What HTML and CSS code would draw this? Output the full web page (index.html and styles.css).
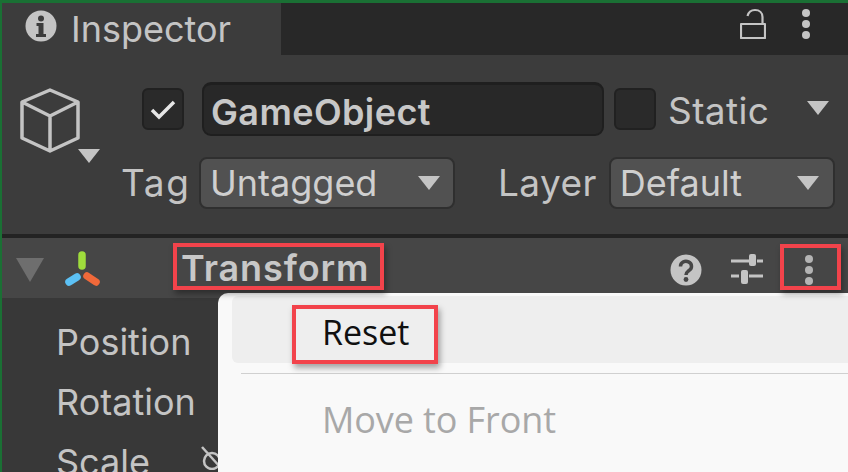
FILE: index.html
```html
<!DOCTYPE html>
<html lang="en">
<head>
<meta charset="utf-8">
<title>Inspector</title>
<link rel="stylesheet" href="styles.css">
</head>
<body>
<div class="window">
  <div class="tabbar">
    <div class="tab">
      <svg class="info-icon" viewBox="0 0 32 32"><circle cx="16" cy="16" r="15.5" fill="#c4c4c4"/><circle cx="16" cy="8.500" r="3" fill="#3c3c3c"/><path d="M11.500 13h7v11h2.500v3h-10v-3h2.500v-8h-2z" fill="#3c3c3c"/></svg>
      <span class="tab-label">Inspector</span>
    </div>
    <div class="tab-tools">
      <svg class="lock-icon" viewBox="0 0 26 32"><path d="M1 16h24v14h-24zM7.500 8C8.500 4 11 2 15 2c4.500 0 7.500 3 7.500 7v7" fill="none" stroke="#c4c4c4" stroke-width="2.200" stroke-linejoin="round"/></svg>
      <svg class="dots-icon" viewBox="0 0 10 32"><circle cx="5" cy="5" r="4" fill="#c4c4c4"/><circle cx="5" cy="16" r="4" fill="#c4c4c4"/><circle cx="5" cy="27" r="4" fill="#c4c4c4"/></svg>
    </div>
  </div>

  <div class="object-panel">
    <div class="cube-col">
      <svg class="cube-icon" viewBox="0 0 62 66"><path d="M31 2 59 14V50L31 63 3 50V14zM3 14 31 28 59 14M31 28V63" fill="none" stroke="#c4c4c4" stroke-width="3.500" stroke-linejoin="round"/></svg>
      <span class="tri tri-cube"></span>
    </div>
    <div class="object-rows">
      <div class="row row-name">
        <span class="check"><svg viewBox="0 0 28 24"><path d="M3 13 10 20 25 5" fill="none" stroke="#e6e6e6" stroke-width="3.500"/></svg></span>
        <span class="name-field">GameObject</span>
        <span class="check check-static"></span>
        <span class="label static-label">Static</span>
        <span class="tri tri-static"></span>
      </div>
      <div class="row row-tag">
        <span class="label tag-label">Tag</span>
        <span class="select select-tag">Untagged<span class="tri"></span></span>
        <span class="label layer-label">Layer</span>
        <span class="select select-layer">Default<span class="tri"></span></span>
      </div>
    </div>
  </div>

  <div class="component-head">
    <span class="fold"></span>
    <svg class="transform-icon" viewBox="0 0 40 38"><line x1="20" y1="4" x2="20" y2="15" stroke="#9fdc3c" stroke-width="7.500" stroke-linecap="round"/><line x1="7" y1="31" x2="15" y2="26" stroke="#5cc1f5" stroke-width="7.500" stroke-linecap="round"/><line x1="25" y1="25" x2="34" y2="31" stroke="#f0693a" stroke-width="7.500" stroke-linecap="round"/></svg>
    <span class="component-title">Transform</span>
    <div class="component-tools">
      <svg class="help-icon" viewBox="0 0 32 32"><circle cx="16" cy="16" r="15.500" fill="#c4c4c4"/><path d="M10.500 12.500a5.500 5 0 1 1 8.500 4c-2 1.500-3 2-3 4.500" fill="none" stroke="#464646" stroke-width="3.500"/><circle cx="16" cy="25.500" r="2.400" fill="#464646"/></svg>
      <svg class="sliders-icon" viewBox="0 0 32 32"><path d="M0 7h18M26 7h6M0 22h8M18 22h14" stroke="#c4c4c4" stroke-width="3" fill="none"/><rect x="18" y="0" width="7" height="12" rx="2" fill="#c4c4c4"/><rect x="10" y="16" width="7" height="14" rx="2" fill="#c4c4c4"/></svg>
      <svg class="dots-icon dots-small" viewBox="0 0 10 32"><circle cx="5" cy="5" r="4" fill="#b4b4b4"/><circle cx="5" cy="16" r="4" fill="#b4b4b4"/><circle cx="5" cy="27" r="4" fill="#b4b4b4"/></svg>
    </div>
  </div>

  <div class="component-body">
    <div class="prop">Position</div>
    <div class="prop">Rotation</div>
    <div class="prop prop-scale">Scale<svg class="link-icon" viewBox="0 0 24 24"><circle cx="13" cy="15" r="8" fill="none" stroke="#c4c4c4" stroke-width="2.500"/><path d="M3 1 22 22" stroke="#c4c4c4" stroke-width="2.500"/></svg></div>
  </div>

  <div class="menu">
    <div class="menu-reset">Reset</div>
    <div class="menu-sep"></div>
    <div class="menu-item">Move to Front</div>
  </div>

  <span class="mark mark-title"></span>
  <span class="mark mark-dots"></span>
  <span class="mark mark-reset"></span>
</div>
</body>
</html>
```
FILE: styles.css
```css
* { box-sizing: border-box; }
html, body { margin: 0; padding: 0; background: #383838; }
body { width: 848px; height: 472px; overflow: hidden; font-family: Inter, "Liberation Sans", sans-serif; color: #c4c4c4; }
.window { position: relative; width: 848px; height: 472px; border-top: 3px solid #1a7034; border-left: 2px solid #1a7034; overflow: hidden; }
.tabbar { display: flex; height: 52px; background: #282828; }
.tab { display: flex; align-items: center; width: 279px; padding: 0 0 6px 23px; background: #3c3c3c; }
.info-icon { width: 32px; height: 32px; }
.tab-label { margin: 5px 0 0 14px; font-size: 36px; line-height: 40px; color: #c4c4c4; }
.tab-tools { flex: 1; display: flex; align-items: flex-start; justify-content: flex-end; padding: 5px 37px 0 0; gap: 35px; }
.lock-icon { width: 26px; height: 32px; }
.dots-icon { width: 10px; height: 32px; }
.object-panel { display: flex; height: 179px; background: #3c3c3c; }
.cube-col { position: relative; width: 120px; padding: 33px 0 0 17px; }
.cube-icon { display: block; width: 62px; height: 66px; }
.tri { display: block; width: 0; height: 0; border-left: 11px solid transparent; border-right: 11px solid transparent; border-top: 14px solid #c4c4c4; }
.tri-cube { position: absolute; left: 76px; top: 94px; }
.object-rows { flex: 1; display: flex; flex-direction: column; }
.row { display: flex; align-items: center; }
.row-name { height: 54px; margin-top: 27px; padding-left: 20px; }
.check { display: flex; align-items: center; justify-content: center; width: 42px; height: 42px; background: #2a2a2a; border: 2px solid #212121; border-radius: 6px; }
.check svg { width: 28px; height: 24px; }
.name-field { width: 402px; height: 54px; margin-left: 18px; padding-left: 7px; background: #282828; border: 2px solid #1f1f1f; border-top-width: 3px; border-radius: 9px; font-size: 36px; line-height: 54px; font-weight: 600; letter-spacing: 0.4px; color: #c8c8c8; }
.check-static { margin-left: 10px; }
.label { font-size: 37px; line-height: 40px; letter-spacing: 0.4px; }
.static-label { margin: 4px 0 0 12px; }
.tri-static { margin-left: 38px; margin-top: -2px; }
.row-tag { height: 54px; margin-top: 20px; }
.tag-label { width: 66px; margin-left: -1px; text-align: right; letter-spacing: 1.6px; white-space: nowrap; }
.select { display: flex; align-items: center; justify-content: space-between; height: 52px; background: #515151; border: 2px solid #2f2f2f; border-radius: 8px; font-size: 36px; line-height: 40px; color: #cfcfcf; }
.select-tag { width: 256px; margin-left: 12px; padding: 0 13px 0 9px; }
.select-layer { width: 226px; margin-left: 12px; padding: 0 14px 0 9px; }
.layer-label { margin-left: 43px; }
.component-head { display: flex; align-items: center; height: 64px; padding-top: 4px; background: #464646; border-top: 4px solid #232323; }
.fold { width: 0; height: 0; margin-left: 14px; border-left: 14px solid transparent; border-right: 14px solid transparent; border-top: 24px solid #6e6e6e; }
.transform-icon { width: 40px; height: 38px; margin-left: 18px; }
.component-title { margin: -4px 0 0 79px; font-size: 36px; line-height: 40px; font-weight: 600; color: #c8c8c8; letter-spacing: 0.9px; }
.component-tools { flex: 1; display: flex; align-items: center; justify-content: flex-end; padding-right: 34px; gap: 29px; }
.help-icon { width: 32px; height: 32px; }
.sliders-icon { width: 32px; height: 32px; margin-right: 12px; }
.dots-small { width: 10px; height: 32px; }
.component-body { padding: 22px 0 0 54px; }
.prop { height: 60px; font-size: 36px; line-height: 44px; color: #c4c4c4; }
.prop-scale { position: relative; }
.link-icon { position: absolute; left: 143px; top: 6px; width: 24px; height: 24px; }
.menu { position: absolute; left: 216px; top: 290px; width: 640px; height: 190px; padding: 3px 0 0 14px; background: #f9f9f9; border-top-left-radius: 10px; font-family: "Open Sans", "Noto Sans", sans-serif; }
.menu-reset { height: 67px; padding-left: 90px; background: #eeeeee; border-radius: 6px 0 0 6px; font-size: 34px; line-height: 72px; color: #101010; }
.menu-sep { height: 1px; margin: 10px 0 0 9px; background: #d0d0d0; }
.menu-item { padding-left: 90px; margin-top: 22px; font-size: 36px; line-height: 48px; letter-spacing: -0.1px; color: #a8a8a8; }
.mark { position: absolute; border: 4px solid #f2434b; box-shadow: 2px 4px 6px rgba(0,0,0,.35); }
.mark-title { left: 171px; top: 240px; width: 211px; height: 47px; }
.mark-dots { left: 778px; top: 241px; width: 61px; height: 46px; }
.mark-reset { left: 290px; top: 302px; width: 146px; height: 59px; }
```
